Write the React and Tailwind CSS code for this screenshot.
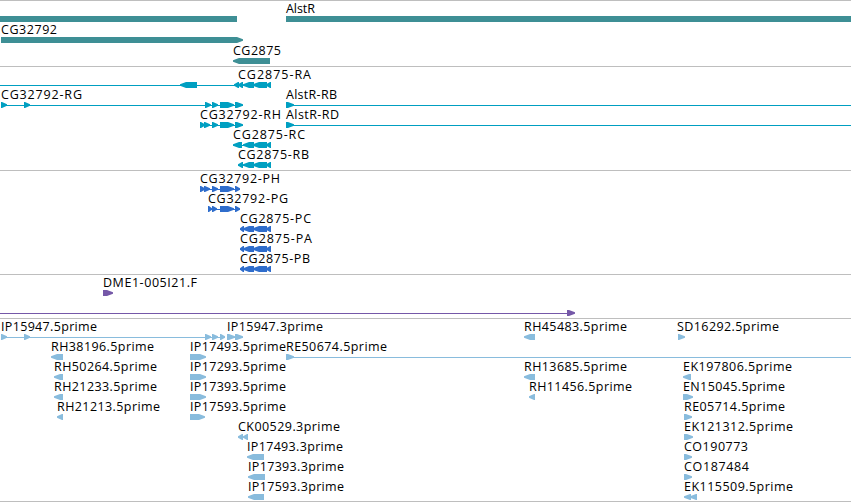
const ARROW = 6

// feats: [start, end, direction], lines: [start, end], labels: [text, x, width]
const cg2875 = [[243, 254, -1], [253, 267, -1], [266, 271, -1]]

const TRACKS = [
  {
    id: 'genes', fill: 'fill-[#3e8f95]', rowH: 21, box: 'pb-0.5',
    rows: [
      { labels: [['AlstR', 286, 29]], feats: [[0, 237, 0], [286, 851, 0]] },
      { labels: [['CG32792', 1, 56]], feats: [[1, 243, 1]] },
      { labels: [['CG2875', 233, 48]], feats: [[233, 270, -1]] },
    ],
  },
  {
    id: 'transcripts', fill: 'fill-[#009fc1]', rowH: 20, box: 'pt-px pb-0.5',
    rows: [
      { labels: [['CG2875-RA', 238, 73]], lines: [[0, 271]], feats: [[180, 197, -1], [234, 239, -1], [238, 243, -1], ...cg2875] },
      {
        labels: [['CG32792-RG', 1, 81], ['AlstR-RB', 286, 51]],
        lines: [[1, 243], [286, 851]],
        feats: [[1, 7, 1], [24, 30, 1], [205, 211, 1], [212, 218, 1], [220, 234, 1], [235, 243, 1], [286, 294, 1]],
      },
      {
        labels: [['CG32792-RH', 200, 81], ['AlstR-RD', 286, 53]],
        lines: [[200, 243], [286, 851]],
        feats: [[200, 205, 1], [204, 210, 1], [212, 218, 1], [220, 234, 1], [235, 243, 1], [286, 294, 1]],
      },
      { labels: [['CG2875-RC', 233, 72]], lines: [[233, 271]], feats: [[233, 242, -1], ...cg2875] },
      { labels: [['CG2875-RB', 238, 71]], lines: [[238, 271]], feats: [[238, 243, -1], ...cg2875] },
    ],
  },
  {
    id: 'proteins', fill: 'fill-[#2f6dcc]', rowH: 20, box: 'pt-px pb-0.5',
    rows: [
      { labels: [['CG32792-PH', 200, 80]], lines: [[200, 240]], feats: [[200, 205, 1], [204, 210, 1], [212, 218, 1], [220, 234, 1], [235, 240, 1]] },
      { labels: [['CG32792-PG', 208, 80]], lines: [[208, 240]], feats: [[208, 212, 1], [212, 217, 1], [220, 234, 1], [235, 240, 1]] },
      { labels: [['CG2875-PC', 240, 71]], lines: [[240, 271]], feats: [[240, 244, -1], ...cg2875] },
      { labels: [['CG2875-PA', 240, 72]], lines: [[240, 271]], feats: [[240, 244, -1], ...cg2875] },
      { labels: [['CG2875-PB', 240, 70]], lines: [[240, 271]], feats: [[240, 244, -1], ...cg2875] },
    ],
  },
  {
    id: 'bacs', fill: 'fill-[#7558a8]', rowH: 20, box: 'pt-px pb-0.5',
    rows: [
      { labels: [['DME1-005I21.F', 103, 94]], feats: [[103, 113, 1]] },
      { lines: [[0, 568]], feats: [[567, 575, 1]] },
    ],
  },
  {
    id: 'ests', fill: 'fill-[#89bcdd]', rowH: 20, box: 'pt-px pb-px border-b',
    rows: [
      {
        labels: [['IP15947.5prime', 1, 96], ['IP15947.3prime', 227, 96], ['RH45483.5prime', 524, 103], ['SD16292.5prime', 677, 102]],
        lines: [[1, 225], [227, 243]],
        feats: [[1, 7, 1], [24, 30, 1], [205, 211, 1], [212, 218, 1], [220, 225, 1], [227, 235, 1], [235, 243, 1], [524, 535, -1], [678, 685, 1]],
      },
      {
        labels: [['RH38196.5prime', 51, 103], ['IP17493.5prime', 190, 96], ['RE50674.5prime', 286, 101]],
        lines: [[286, 851]],
        feats: [[51, 63, -1], [190, 206, 1], [286, 294, 1]],
      },
      {
        labels: [['RH50264.5prime', 54, 103], ['IP17293.5prime', 190, 96], ['RH13685.5prime', 524, 103], ['EK197806.5prime', 683, 109]],
        feats: [[54, 63, -1], [190, 206, 1], [524, 535, -1], [683, 691, -1]],
      },
      {
        labels: [['RH21233.5prime', 54, 103], ['IP17393.5prime', 190, 96], ['RH11456.5prime', 529, 103], ['EN15045.5prime', 683, 102]],
        feats: [[54, 63, -1], [190, 206, 1], [529, 535, -1], [683, 693, 1]],
      },
      {
        labels: [['RH21213.5prime', 57, 103], ['IP17593.5prime', 190, 96], ['RE05714.5prime', 684, 101]],
        feats: [[57, 63, -1], [190, 205, 1], [684, 692, 1]],
      },
      { labels: [['CK00529.3prime', 238, 102], ['EK121312.5prime', 684, 109]], feats: [[238, 243, -1], [243, 248, -1], [684, 693, 1]] },
      { labels: [['IP17493.3prime', 247, 96], ['CO190773', 684, 64]], feats: [[247, 264, -1], [684, 692, 1]] },
      { labels: [['IP17393.3prime', 248, 96], ['CO187484', 684, 65]], feats: [[248, 265, -1], [684, 692, 1]] },
      { labels: [['IP17593.3prime', 248, 96], ['EK115509.5prime', 684, 109]], feats: [[248, 264, -1], [684, 691, -1], [690, 697, -1]] },
    ],
  },
]

// Block with a blunt arrow head on the side it is read towards
function glyphPoints([x1, x2, dir], top) {
  const bottom = top + 6
  const head = Math.min(ARROW, x2 - x1 - 1)
  const tip = [top + 2.2, top + 3.8]
  if (dir > 0) return `${x1},${top} ${x2 - head},${top} ${x2},${tip[0]} ${x2},${tip[1]} ${x2 - head},${bottom} ${x1},${bottom}`
  if (dir < 0) return `${x2},${top} ${x1 + head},${top} ${x1},${tip[0]} ${x1},${tip[1]} ${x1 + head},${bottom} ${x2},${bottom}`
  return `${x1},${top} ${x2},${top} ${x2},${bottom} ${x1},${bottom}`
}

function Row({ row, height }) {
  const { labels = [], lines = [], feats } = row
  const top = height - 6
  return (
    <svg width="851" height={height} className="block shrink-0 overflow-visible">
      {lines.map(([a, b]) => (
        <rect key={a} x={a} y={top + 3} width={b - a} height="1" shapeRendering="crispEdges" />
      ))}
      {feats.map(f => (
        <polygon key={f[0]} points={glyphPoints(f, top)} />
      ))}
      {labels.map(([text, x, width]) => (
        <text key={text} x={x} y={height - 9} textLength={width} className="fill-black">
          {text}
        </text>
      ))}
    </svg>
  )
}

function Track({ track }) {
  return (
    <section className={`flex flex-col border-t border-[#bebebe] ${track.box} ${track.fill}`}>
      {track.rows.map((row, i) => <Row key={i} row={row} height={track.rowH} />)}
    </section>
  )
}

export default function App() {
  return (
    <main className="w-[851px] h-[502px] overflow-hidden bg-white flex flex-col text-[12.5px] font-['Open_Sans','Noto_Sans',sans-serif]">
      {TRACKS.map(track => <Track key={track.id} track={track} />)}
    </main>
  )
}
